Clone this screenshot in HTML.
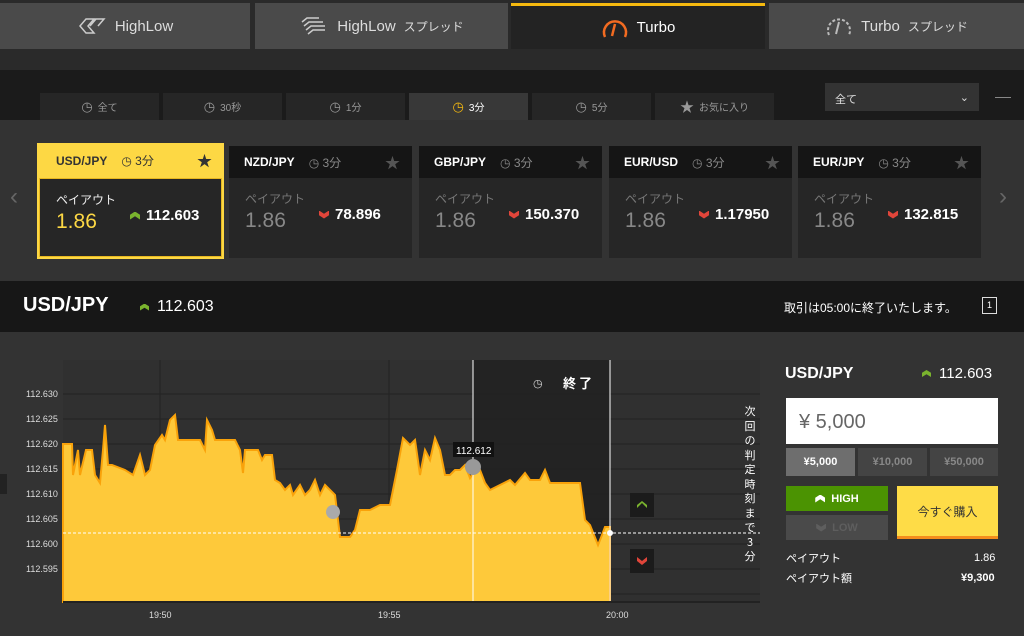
<!DOCTYPE html>
<html><head><meta charset="utf-8"><style>
*{margin:0;padding:0;box-sizing:border-box}
body{width:1024px;height:636px;overflow:hidden;background:#333;font-family:"Liberation Sans","Noto Sans CJK JP",sans-serif;color:#fff;position:relative}
.a{position:absolute}
.tab{position:absolute;top:3px;height:46px;background:#4a4a4a;color:#ddd;font-size:15px;display:flex;align-items:center;justify-content:center;gap:8px}
.ft{position:absolute;top:93px;height:27px;background:#262626;color:#999;font-size:10px;display:flex;align-items:center;justify-content:center;gap:5px}
.ft i{font-style:normal;font-size:13px}
.card{position:absolute;top:146px;height:112px;width:183px}
.ch{height:32px;background:#151515;display:flex;align-items:center;padding-left:15px;font-size:12px;font-weight:bold}
.ch .t{font-weight:normal;color:#888;margin-left:14px}
.ch .s{margin-left:auto;margin-right:12px;color:#555;font-size:15px}
.cb{height:80px;background:#262626;position:relative}
.cb .p{position:absolute;left:16px;top:12px;font-size:12px;color:#777}
.cb .v{position:absolute;left:16px;top:31px;font-size:21px;color:#888}
.cb .q{position:absolute;left:90px;top:28px;font-size:15px;font-weight:bold;display:flex;align-items:center;gap:6px}
.dn{width:10px;height:8px;background:#e0453a;clip-path:polygon(0 0,50% 40%,100% 0,100% 60%,50% 100%,0 60%)}
.up{width:10px;height:8px;background:#7ab32e;clip-path:polygon(0 100%,50% 60%,100% 100%,100% 40%,50% 0,0 40%)}
.yl{position:absolute;left:26px;font-size:9px;color:#ddd}
.am{position:absolute;top:448px;height:28px;background:#444;color:#888;font-size:11px;font-weight:bold;display:flex;align-items:center;justify-content:center}
</style></head><body>
<div class="a" style="left:0;top:0;width:1024px;height:70px;background:#2a2a2a"></div>
<div class="tab" style="left:0;width:250px"><svg width="30" height="20" viewBox="0 0 30 20"><path d="M3 10l6-7h8l-6 7 6 7H9z M13 10l6-7h8l-6 7" fill="none" stroke="#ccc" stroke-width="1.5"/></svg>HighLow</div>
<div class="tab" style="left:255px;width:253px"><svg width="30" height="20"><path d="M3 6l5-4h12M5 10l5-4h14M7 14l5-4h14M9 18l5-4h12" fill="none" stroke="#ccc" stroke-width="1.5"/></svg>HighLow <span style="font-size:12px">スプレッド</span></div>
<div class="tab" style="left:511px;width:254px;background:#232323;color:#fff;border-top:3px solid #f5b90f"><svg width="28" height="24" viewBox="0 0 28 24"><path d="M4 21A11 11 0 1 1 24 21" fill="none" stroke="#f26b21" stroke-width="2.5"/><path d="M14 8l-3 12" stroke="#f26b21" stroke-width="2.5"/></svg>Turbo</div>
<div class="tab" style="left:769px;width:255px"><svg width="28" height="24" viewBox="0 0 28 24"><path d="M4 21A11 11 0 1 1 24 21" fill="none" stroke="#bbb" stroke-width="2" stroke-dasharray="3 2"/><path d="M14 8l-3 12" stroke="#bbb" stroke-width="2"/></svg>Turbo <span style="font-size:12px">スプレッド</span></div>
<div class="a" style="left:0;top:70px;width:1024px;height:50px;background:#1b1b1b"></div>
<div class="ft" style="left:40px;width:119px"><i>◷</i> 全て</div>
<div class="ft" style="left:163px;width:119px"><i>◷</i> 30秒</div>
<div class="ft" style="left:286px;width:119px"><i>◷</i> 1分</div>
<div class="ft" style="left:409px;width:119px;background:#383838;color:#fff"><i style="color:#f5b90f">◷</i> 3分</div>
<div class="ft" style="left:532px;width:119px"><i>◷</i> 5分</div>
<div class="ft" style="left:655px;width:119px"><span style="font-size:14px">★</span> お気に入り</div>
<div class="a" style="left:825px;top:83px;width:154px;height:28px;background:#333;font-size:11px;color:#ddd;padding:8px 10px">全て<span style="float:right">⌄</span></div>
<div class="a" style="left:995px;top:97px;width:16px;height:1px;background:#888"></div>
<div class="a" style="left:10px;top:183px;color:#666;font-size:24px">‹</div>
<div class="a" style="left:999px;top:183px;color:#666;font-size:24px">›</div>

<div class="card" style="left:37px;top:143px;width:187px;height:116px;background:#fdd844">
<div class="ch" style="background:#fdd844;color:#333;height:35px;padding-left:19px">USD/JPY<span class="t" style="color:#333">◷ 3分</span><span class="s" style="color:#333">★</span></div>
<div class="cb" style="background:#262626;margin:0 2px;height:79px;border:1px solid #e7b720"><div class="p" style="color:#eee">ペイアウト</div><div class="v" style="color:#fdd844">1.86</div><div class="q"><span class="up"></span>112.603</div></div></div>
<div class="card" style="left:229px"><div class="ch">NZD/JPY<span class="t">◷ 3分</span><span class="s">★</span></div><div class="cb"><div class="p">ペイアウト</div><div class="v">1.86</div><div class="q"><span class="dn"></span>78.896</div></div></div>
<div class="card" style="left:419px"><div class="ch">GBP/JPY<span class="t">◷ 3分</span><span class="s">★</span></div><div class="cb"><div class="p">ペイアウト</div><div class="v">1.86</div><div class="q"><span class="dn"></span>150.370</div></div></div>
<div class="card" style="left:609px"><div class="ch">EUR/USD<span class="t">◷ 3分</span><span class="s">★</span></div><div class="cb"><div class="p">ペイアウト</div><div class="v">1.86</div><div class="q"><span class="dn"></span>1.17950</div></div></div>
<div class="card" style="left:798px"><div class="ch">EUR/JPY<span class="t">◷ 3分</span><span class="s">★</span></div><div class="cb"><div class="p">ペイアウト</div><div class="v">1.86</div><div class="q"><span class="dn"></span>132.815</div></div></div>

<div class="a" style="left:0;top:281px;width:1024px;height:51px;background:#171717"></div>
<div class="a" style="left:23px;top:294px;font-size:20px;font-weight:bold">USD/JPY</div>
<div class="a" style="left:140px;top:298px;font-size:16px;display:flex;align-items:center;gap:8px"><span class="up" style="width:9px;height:7px"></span>112.603</div>
<div class="a" style="left:784px;top:299px;font-size:12px">取引は05:00に終了いたします。</div>
<div class="a" style="left:982px;top:297px;width:15px;height:17px;border:1px solid #ddd;font-size:9px;text-align:center;line-height:15px">1</div>

<svg class="a" style="left:0;top:340px" width="770" height="296">
<g transform="translate(0,-340)">
<rect x="63" y="360" width="697" height="242" fill="#303030"/>
<rect x="473" y="360" width="137" height="242" fill="#232323"/>
<g stroke="#222" stroke-width="1">
<line x1="63" y1="394" x2="760" y2="394"/><line x1="63" y1="419" x2="760" y2="419"/><line x1="63" y1="444" x2="760" y2="444"/><line x1="63" y1="469" x2="760" y2="469"/><line x1="63" y1="494" x2="760" y2="494"/><line x1="63" y1="519" x2="760" y2="519"/><line x1="63" y1="544" x2="760" y2="544"/><line x1="63" y1="569" x2="760" y2="569"/><line x1="63" y1="594" x2="760" y2="594"/>
<line x1="160" y1="360" x2="160" y2="602"/><line x1="389" y1="360" x2="389" y2="602"/>
</g>
<polygon fill="#fec93a" stroke="#f9a20a" stroke-width="2" points="63,602 63,444 72,444 73,475 78,450 80,475 86,450 92,450 95,475 100,483 103,450 105,425 108,465 112,465 125,470 133,475 140,455 145,475 150,470 155,445 162,435 165,440 170,420 175,415 178,440 185,440 200,440 205,450 207,420 212,430 215,440 225,440 235,440 240,450 243,473 245,450 258,450 262,460 265,455 272,455 275,480 280,483 285,490 290,485 293,495 300,485 305,495 310,490 315,480 320,495 325,485 335,495 340,537 350,537 355,530 360,510 370,510 380,505 390,505 397,470 403,438 410,445 415,440 420,475 425,450 430,460 435,438 440,450 445,475 450,475 455,470 460,470 465,465 470,478 475,470 480,470 485,483 490,490 500,485 510,480 515,485 525,473 530,480 540,480 545,470 550,483 580,483 585,520 590,525 598,545 602,535 605,527 610,527 610,602"/>
<line x1="63" y1="533" x2="760" y2="533" stroke="#fff" stroke-dasharray="3 2" stroke-width="1"/>
<line x1="473" y1="360" x2="473" y2="602" stroke="#fff"/>
<line x1="610" y1="360" x2="610" y2="602" stroke="#fff"/>
<circle cx="610" cy="533" r="3" fill="#fff"/>
<line x1="63" y1="602" x2="760" y2="602" stroke="#222" stroke-width="2"/>
<circle cx="333" cy="512" r="7" fill="#aaa"/>
<circle cx="473" cy="467" r="8" fill="#999"/>
<rect x="453" y="442" width="41" height="15" fill="#111"/>
<text x="456" y="454" font-size="10" fill="#fff" font-family="Liberation Sans">112.612</text>
<text x="533" y="387" font-size="11" fill="#ddd">◷</text>
<text x="563" y="388" font-size="13" fill="#fff" font-weight="bold" font-family="Noto Sans CJK JP">終 了</text>
<rect x="630" y="493" width="24" height="24" fill="#1b1b1b"/><path d="M637 508l5-5 5 5v-3l-5-4-5 4z" fill="#7ab32e"/>
<rect x="630" y="549" width="24" height="24" fill="#1b1b1b"/><path d="M637 557l5 4 5-4v4l-5 4-5-4z" fill="#e0453a"/>
<text x="149" y="618" font-size="9" fill="#ddd" font-family="Liberation Sans">19:50</text>
<text x="378" y="618" font-size="9" fill="#ddd" font-family="Liberation Sans">19:55</text>
<text x="606" y="618" font-size="9" fill="#ddd" font-family="Liberation Sans">20:00</text>
<rect x="0" y="474" width="7" height="20" fill="#222"/>
</g></svg>
<div class="yl" style="top:389px">112.630</div><div class="yl" style="top:414px">112.625</div><div class="yl" style="top:439px">112.620</div><div class="yl" style="top:464px">112.615</div><div class="yl" style="top:489px">112.610</div><div class="yl" style="top:514px">112.605</div><div class="yl" style="top:539px">112.600</div><div class="yl" style="top:564px">112.595</div>
<div class="a" style="left:743px;top:404px;width:14px;font-size:11px;line-height:14.5px;text-align:center;font-family:'Noto Sans CJK JP',sans-serif">次回の判定時刻まで3分</div>

<div class="a" style="left:785px;top:365px;font-size:16px;font-weight:bold">USD/JPY</div>
<div class="a" style="left:922px;top:365px;font-size:15px;display:flex;align-items:center;gap:8px"><span class="up" style="width:9px;height:7px"></span>112.603</div>
<div class="a" style="left:786px;top:398px;width:212px;height:46px;background:#fff;color:#666;font-size:20px;padding:13px 13px">¥ 5,000</div>
<div class="am" style="left:786px;width:69px;background:#6e6e6e;color:#fff">¥5,000</div>
<div class="am" style="left:858px;width:69px">¥10,000</div>
<div class="am" style="left:930px;width:68px">¥50,000</div>
<div class="a" style="left:786px;top:486px;width:102px;height:25px;background:#4b9302;font-size:11px;font-weight:bold;display:flex;align-items:center;justify-content:center;gap:6px"><span class="up" style="background:#fff;width:10px"></span>HIGH</div>
<div class="a" style="left:786px;top:515px;width:102px;height:25px;background:#4a4a4a;color:#5e5e5e;font-size:11px;font-weight:bold;display:flex;align-items:center;justify-content:center;gap:6px"><span class="dn" style="background:#5e5e5e;width:10px"></span>LOW</div>
<div class="a" style="left:897px;top:486px;width:101px;height:53px;background:#fedc47;border-bottom:3px solid #f48d1c;color:#333;font-size:12px;display:flex;align-items:center;justify-content:center">今すぐ購入</div>
<div class="a" style="left:786px;top:550px;font-size:11px">ペイアウト</div>
<div class="a" style="left:974px;top:552px;font-size:11px">1.86</div>
<div class="a" style="left:786px;top:570px;font-size:11px">ペイアウト額</div>
<div class="a" style="left:961px;top:572px;font-size:11px;font-weight:bold">¥9,300</div>
</body></html>
